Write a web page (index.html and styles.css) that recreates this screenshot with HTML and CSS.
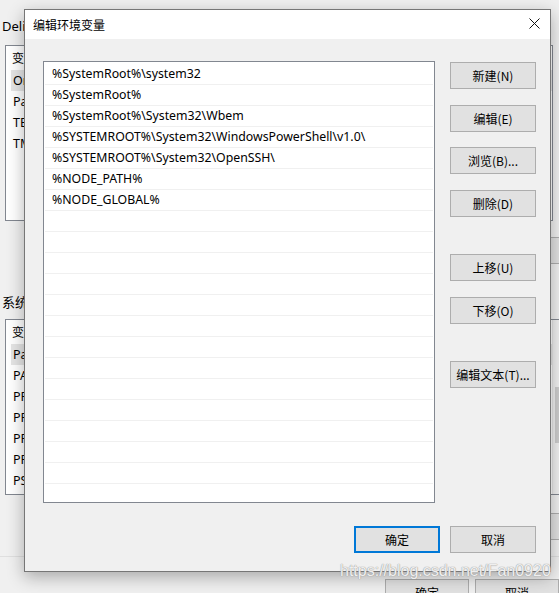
FILE: index.html
```html
<!DOCTYPE html>
<html>
  <head>
    <title>编辑环境变量</title>
    <link rel="stylesheet" href="styles.css">
  </head>
  <body>
    <!-- Window behind the dialog -->
    <div class="backdrop">
      <div class="group-label">Delia 的用户变量(U)</div>
      <div class="listview user-vars">
        <div class="lv-main">
          <div class="lv-header">变量</div>
          <div class="lv-row selected">OneDrive</div>
          <div class="lv-row">Path</div>
          <div class="lv-row">TEMP</div>
          <div class="lv-row">TMP</div>
        </div>
      </div>
      <div class="back-buttons">
        <button class="win-button">新建(N)...</button>
        <button class="win-button">编辑(E)...</button>
        <button class="win-button">删除(D)</button>
      </div>
      <div class="group-label system-label">系统变量(S)</div>
      <div class="listview sys-vars">
        <div class="lv-main">
          <div class="lv-header">变量</div>
          <div class="lv-row selected">Path</div>
          <div class="lv-row">PATHEXT</div>
          <div class="lv-row">PROCESSOR_ARCHITECTURE</div>
          <div class="lv-row">PROCESSOR_IDENTIFIER</div>
          <div class="lv-row">PROCESSOR_LEVEL</div>
          <div class="lv-row">PROCESSOR_REVISION</div>
          <div class="lv-row">PSModulePath</div>
        </div>
        <div class="scrollbar">
          <span class="arrow">&#9652;</span>
          <div class="thumb"></div>
        </div>
      </div>
      <div class="back-buttons second">
        <button class="win-button">新建(W)...</button>
        <button class="win-button">编辑(I)...</button>
        <button class="win-button">删除(L)</button>
      </div>
      <div class="separator"></div>
      <div class="back-footer">
        <button class="win-button">确定</button>
        <button class="win-button">取消</button>
      </div>
    </div>

    <!-- Edit environment variable dialog -->
    <div class="dialog">
      <div class="titlebar">
        <span class="title">编辑环境变量</span>
        <svg class="close" width="11" height="11" viewBox="0 0 11 11">
          <path d="M0.5 0.5 L10.5 10.5 M10.5 0.5 L0.5 10.5" stroke="#111" stroke-width="1" fill="none" />
        </svg>
      </div>
      <div class="dialog-body">
        <div class="main">
          <div class="pathlist">
            <div class="path-row">%SystemRoot%\system32</div>
            <div class="path-row">%SystemRoot%</div>
            <div class="path-row">%SystemRoot%\System32\Wbem</div>
            <div class="path-row">%SYSTEMROOT%\System32\WindowsPowerShell\v1.0\</div>
            <div class="path-row">%SYSTEMROOT%\System32\OpenSSH\</div>
            <div class="path-row">%NODE_PATH%</div>
            <div class="path-row">%NODE_GLOBAL%</div>
            <div class="path-row"></div>
            <div class="path-row"></div>
            <div class="path-row"></div>
            <div class="path-row"></div>
            <div class="path-row"></div>
            <div class="path-row"></div>
            <div class="path-row"></div>
            <div class="path-row"></div>
            <div class="path-row"></div>
            <div class="path-row"></div>
            <div class="path-row"></div>
            <div class="path-row"></div>
            <div class="path-row"></div>
            <div class="path-row"></div>
          </div>
          <div class="side-buttons">
            <button class="win-button">新建(N)</button>
            <button class="win-button">编辑(E)</button>
            <button class="win-button">浏览(B)...</button>
            <button class="win-button">删除(D)</button>
            <button class="win-button spaced">上移(U)</button>
            <button class="win-button">下移(O)</button>
            <button class="win-button spaced">编辑文本(T)...</button>
          </div>
        </div>
        <div class="footer">
          <button class="win-button default">确定</button>
          <button class="win-button">取消</button>
        </div>
      </div>
    </div>

    <div class="watermark">https://blog.csdn.net/Fan0920</div>
  </body>
</html>
```

FILE: styles.css
```css
/* General page */
body {
  margin: 0;
  width: 559px;
  height: 593px;
  overflow: hidden;
  position: relative;
  background-color: #f0f0f0;
  font-family: "Noto Sans", "Noto Sans CJK SC", sans-serif;
  font-size: 12px;
  color: #000;
}

/* Shared windows button */
.win-button {
  width: 86px;
  height: 27px;
  padding: 0;
  background-color: #e1e1e1;
  border: 1px solid #adadad;
  font-family: "Noto Sans CJK SC", sans-serif;
  font-size: 12px;
  color: #000;
  box-sizing: border-box;
}

/* Background window */
.backdrop {
  padding-top: 17px;
}

.group-label {
  padding-left: 2px;
  line-height: 18px;
  font-size: 13px;
  white-space: nowrap;
}

.system-label {
  margin-top: 29px;
}

.listview {
  display: flex;
  margin-left: 5px;
  height: 176px;
  background-color: #fff;
  border: 1px solid #828790;
  box-sizing: border-box;
}

.user-vars {
  margin-top: 10px;
  width: 548px;
}

.sys-vars {
  margin-top: 8px;
  width: 566px;
}

.lv-main {
  flex: 1;
}

.lv-header {
  height: 24px;
  line-height: 24px;
  padding-left: 6px;
  font-family: "Noto Sans CJK SC", sans-serif;
  font-size: 12px;
}

.lv-row {
  height: 21px;
  line-height: 21px;
  margin-left: 5px;
  padding-left: 2px;
  font-size: 12.5px;
}

.lv-row.selected {
  background-color: #e5e5e5;
}

.scrollbar {
  width: 17px;
  background-color: #f0f0f0;
  border-left: 1px solid #e6e6e6;
}

.scrollbar .arrow {
  display: block;
  height: 17px;
  line-height: 17px;
  text-align: center;
  font-size: 8px;
  color: #606060;
}

.scrollbar .thumb {
  margin: 50px 2px 0 2px;
  height: 56px;
  background-color: #cdcdcd;
}

.back-buttons {
  display: flex;
  justify-content: flex-end;
  gap: 8px;
  margin-top: 16px;
  margin-right: -6px;
}

.back-buttons.second {
  margin-top: 18px;
}

.separator {
  margin-top: 16px;
  height: 1px;
  background-color: #dfdfdf;
}

.back-footer {
  display: flex;
  gap: 6px;
  margin-top: 22px;
  padding-left: 385px;
}

/* Dialog */
.dialog {
  position: absolute;
  left: 24px;
  top: 9px;
  width: 527px;
  height: 563px;
  box-sizing: border-box;
  border: 1px solid #767676;
  background-color: #f0f0f0;
  box-shadow: 0 5px 16px rgba(0, 0, 0, 0.3);
}

.titlebar {
  height: 29px;
  display: flex;
  align-items: center;
  justify-content: space-between;
  padding: 0 10px 0 8px;
  background-color: #fff;
}

.title {
  font-family: "Noto Sans CJK SC", sans-serif;
  font-size: 12px;
}

.close {
  margin-bottom: 2px;
}

.dialog-body {
  padding: 22px 14px 0 18px;
}

.main {
  display: flex;
  gap: 15px;
}

/* Path list */
.pathlist {
  width: 392px;
  height: 442px;
  padding: 2px 1px 0 1px;
  box-sizing: border-box;
  overflow: hidden;
  background-color: #fff;
  border: 1px solid #828790;
}

.path-row {
  height: 21px;
  line-height: 20px;
  padding-left: 7px;
  box-sizing: border-box;
  border-bottom: 1px solid #f0f0f0;
  font-size: 12.3px;
  white-space: nowrap;
}

/* Right column buttons */
.side-buttons {
  display: flex;
  flex-direction: column;
  gap: 15.5px;
  margin-top: 1px;
}

.side-buttons .spaced {
  margin-top: 22px;
}

/* OK / Cancel */
.footer {
  display: flex;
  justify-content: flex-end;
  gap: 10px;
  margin-top: 23px;
}

.win-button.default {
  border: 2px solid #0078d7;
}

/* Blog watermark over the screenshot */
.watermark {
  position: absolute;
  left: 340px;
  top: 562px;
  font-family: "Liberation Sans", sans-serif;
  font-size: 16px;
  color: rgba(255, 255, 255, 0.85);
  text-shadow: 0 0 1px #9a9a9a, 0 0 1px #9a9a9a;
  white-space: nowrap;
}
```
